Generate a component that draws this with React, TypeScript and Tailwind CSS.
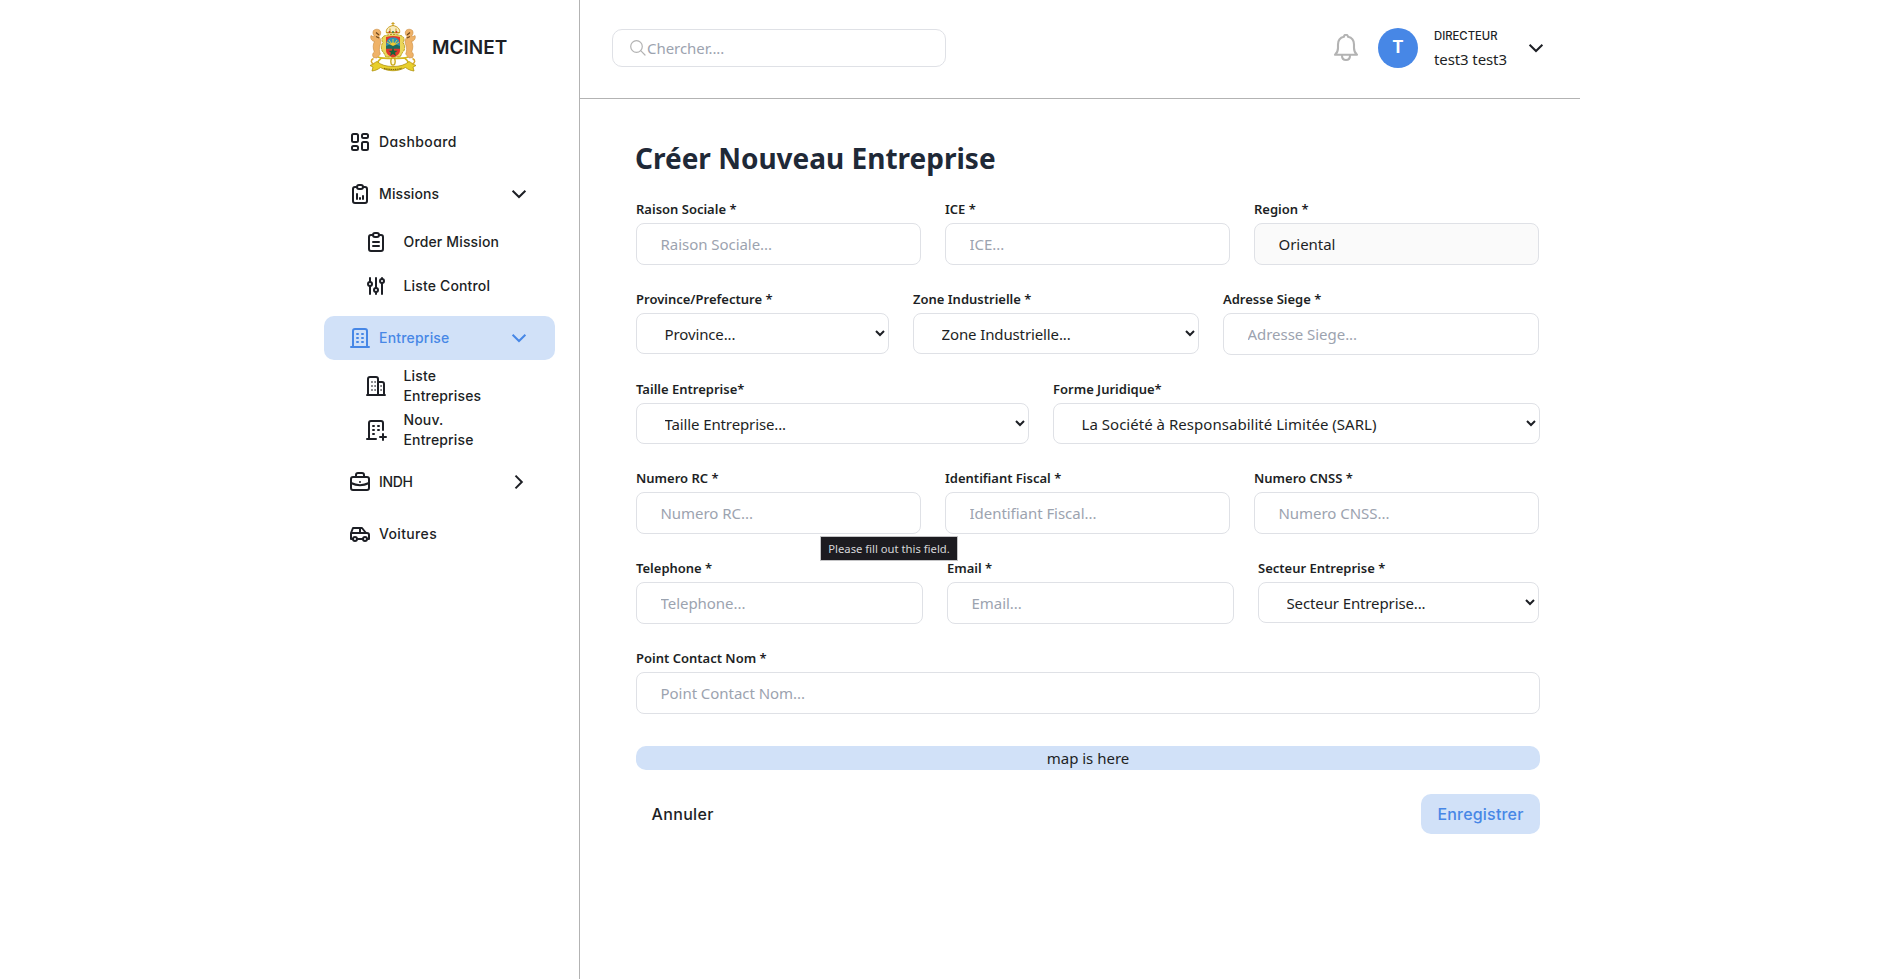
import type { ReactNode } from "react";

const geo = "font-['Inter',sans-serif] [font-feature-settings:'cv11','ss03']";

function Icon({ size = 24, children, className = "" }: { size?: number; children: ReactNode; className?: string }) {
  return (
    <svg width={size} height={size} viewBox="0 0 24 24" fill="none" stroke="currentColor" strokeWidth="2" strokeLinecap="round" strokeLinejoin="round" className={`shrink-0 ${className}`}>
      {children}
    </svg>
  );
}

const DashboardIcon = () => (
  <Icon>
    <rect x="4" y="4" width="6" height="8" rx="1.5" />
    <rect x="14" y="4" width="6" height="4" rx="1.5" />
    <rect x="14" y="12" width="6" height="8" rx="1.5" />
    <rect x="4" y="16" width="6" height="4" rx="1.5" />
  </Icon>
);

const ClipboardFrame = () => (
  <>
    <path d="M9 5H7a2 2 0 0 0-2 2v12a2 2 0 0 0 2 2h10a2 2 0 0 0 2-2V7a2 2 0 0 0-2-2h-2" />
    <rect x="9" y="3" width="6" height="4" rx="2" />
  </>
);

const ClipboardChartIcon = () => (
  <Icon>
    <ClipboardFrame />
    <path d="M9 12v5M12 16v1M15 14v3" />
  </Icon>
);

const ClipboardTextIcon = () => (
  <Icon>
    <ClipboardFrame />
    <path d="M9 12h6M9 16h6" />
  </Icon>
);

const AdjustmentsIcon = () => (
  <Icon>
    <circle cx="6" cy="10" r="2" />
    <path d="M6 4v4M6 12v8" />
    <circle cx="12" cy="16" r="2" />
    <path d="M12 4v10M12 18v2" />
    <circle cx="18" cy="7" r="2" />
    <path d="M18 4v1M18 9v11" />
  </Icon>
);

const BuildingIcon = () => (
  <Icon>
    <path d="M3 21h18M5 21V5a2 2 0 0 1 2-2h10a2 2 0 0 1 2 2v16" />
    <path d="M9 8h1M9 12h1M9 16h1M14 8h1M14 12h1M14 16h1" />
  </Icon>
);

const BuildingsIcon = () => (
  <Icon>
    <path d="M3 21h18M4 21V5a2 2 0 0 1 2-2h6a2 2 0 0 1 2 2v16M14 8h4a2 2 0 0 1 2 2v11" />
    <path d="M7.9 8h.2M7.9 12h.2M7.9 16h.2M11 8h.2M11 12h.2M11 16h.2M17 12h.2M17 16h.2" strokeWidth="1.6" />
  </Icon>
);

const BuildingPlusIcon = () => (
  <Icon>
    <path d="M3 21h9M5 21V5a2 2 0 0 1 2-2h10a2 2 0 0 1 2 2v7M16 19h6M19 16v6" />
    <path d="M9 8h1M9 12h1M9 16h1M14 8h1M14 12h1" />
  </Icon>
);

const BriefcaseIcon = () => (
  <Icon>
    <rect x="3" y="7" width="18" height="13" rx="2" />
    <path d="M8 7V5a2 2 0 0 1 2-2h4a2 2 0 0 1 2 2v2M12 12v.01M3 13a20 20 0 0 0 18 0" />
  </Icon>
);

const CarIcon = () => (
  <Icon>
    <circle cx="7" cy="17" r="2" />
    <circle cx="17" cy="17" r="2" />
    <path d="M5 17H3v-6l2-5h9l4 5h1a2 2 0 0 1 2 2v4h-2M9 17h6M3 11h15M12 11V6" />
  </Icon>
);

function Chevron({ right = false, className = "" }: { right?: boolean; className?: string }) {
  return (
    <svg width="16" height="16" viewBox="0 0 16 16" fill="none" stroke="currentColor" strokeWidth="2" className={`shrink-0 ${className}`}>
      <path d={right ? "M4.500 1.600 10.800 8 4.500 14.400" : "M1.600 4.700 8 11 14.400 4.700"} />
    </svg>
  );
}

function Emblem() {
  return (
    <svg width="48" height="52" viewBox="0 0 48 52" fill="none" className="shrink-0">
      <g stroke="#c99b1a" strokeWidth="1">
        <path d="M24 1v4M22.4 2.6h3.2" />
        <path d="M17.500 12c-1-3.500 1.500-6.500 6.500-7.500 5 1 7.500 4 6.500 7.500z" fill="#f8ecc0" />
        <path d="M17.500 11.500h13M21 11V7.500M27 11V7.500" />
      </g>
      <circle cx="20.500" cy="11" r=".9" fill="#c8322b" />
      <circle cx="24" cy="11" r=".9" fill="#2c7a45" />
      <circle cx="27.500" cy="11" r=".9" fill="#c8322b" />
      <path d="M16.500 14.500c-4 1-4.500 4.500-2.500 7-2.500 3-2 8 .5 10l2.500 4.500h14l2.500-4.500c2.500-2 3-7 .5-10 2-2.500 1.500-6-2.500-7-5-1.500-10-1.500-15 0z" fill="#ead75a" stroke="#b79a18" strokeWidth="1" strokeDasharray="2.500 .8" />
      <g fill="#efb268" stroke="#c98a3d" strokeWidth=".6">
        <path d="M4.500 9.500c2.500-2 6-1.500 7 1 .8 2-.5 4-1.500 5 2 3 2.500 6 1 9-1 3-.8 5.500.3 8.500L8 37l-3.500-.5c-1.500-2-1-4.500.8-5.500-1.500-4-1.500-7.500.2-10.500-3-.5-4.500-3.500-3.500-6 1.500 1 2.500 1.500 3.500.7-1.500-1.700-2-3.500-1-5.700z" />
        <path d="M43.500 9.500c-2.500-2-6-1.500-7 1-.8 2 .5 4 1.500 5-2 3-2.500 6-1 9 1 3 .8 5.500-.3 8.500L40 37l3.500-.5c1.500-2 1-4.500-.8-5.500 1.500-4 1.500-7.500-.2-10.500 3-.5 4.500-3.500 3.500-6-1.500 1-2.500 1.500-3.500.7 1.500-1.700 2-3.500 1-5.700z" />
      </g>
      <path d="M7 11.500l3 2.500M7 15.500l3 1.500M41 11.500l-3 2.500M41 15.500l-3 1.500" stroke="#6b451c" strokeWidth="1.200" />
      <path d="M17 16c5-1.500 9-1.500 14 0v13c0 4-3 6-7 7.500-4-1.500-7-3.500-7-7.500z" fill="#e0392c" />
      <path d="M17 26c0-8 3-9.500 7-9.500s7 1.500 7 9.500z" fill="#2f93b5" />
      <path d="M24 25v-7M24 25l-4-6M24 25l4-6M24 25l-6-4M24 25l6-4" stroke="#d8cc45" strokeWidth="1" />
      <path d="M20.500 25a3.500 3.500 0 0 1 7 0z" fill="#f1c933" />
      <path d="M17 25l4-1.500 3 1.500 3-1.500 4 1.500v2.800H17z" fill="#1e6b60" />
      <path d="M24 26.500l1.300 3.300h3.300l-2.600 2 1 3.200-3-2-3 2 1-3.200-2.600-2h3.300z" fill="#17633a" />
      <path d="M9 36c4 1.500 9 1.500 15 1.500s11 0 15-1.500M8 43c1-2.500 2-4.500 4-5.500M40 43c-1-2.500-2-4.500-4-5.500" stroke="#d4b81f" strokeWidth="1.600" />
      <ellipse cx="24" cy="40.500" rx="2.200" ry="3.600" fill="#fff9dc" stroke="#c9a714" strokeWidth="1.300" />
      <path d="M1 44.500c3-1 4.500-3 7-4 4 3.500 9 5 16 5s12-1.500 16-5c2.500 1 4 3 7 4l-3 1.500 1 4c-4-.5-6.500-2-8.500-3.500-8 4.300-17 4.300-25 0-2 1.500-4.500 3-8.500 3.500l1-4z" fill="#e8cf2c" stroke="#b0930f" strokeWidth=".8" />
      <path d="M15 47.300c6 1.600 12 1.600 18 0" stroke="#7d6a14" strokeWidth="1.200" strokeDasharray="1.500 .7" />
      <path d="M4.500 37.500c-3 1.500-3 4.500.5 5.500M43.500 37.500c3 1.500 3 4.500-.5 5.500" stroke="#d9a92c" strokeWidth="1.500" />
    </svg>
  );
}

function NavItem({ icon, label, arrow, active = false, tracking }: { icon: ReactNode; label: string; arrow?: "down" | "right"; active?: boolean; tracking: string }) {
  return (
    <a className={`flex h-11 w-[231px] items-center gap-2 rounded-[10px] pr-7 pl-6 text-[14px] font-medium ${tracking} ${active ? "bg-[#d1e1f8] text-[#4787e6]" : "text-[#1d1f25]"}`}>
      {icon}
      <span className="-ml-px flex-1 pb-px">{label}</span>
      {arrow && <Chevron right={arrow === "right"} />}
    </a>
  );
}

function SubItem({ icon, label }: { icon: ReactNode; label: string }) {
  return (
    <a className="flex h-11 w-[200px] items-center gap-[15.500px] pl-10 text-[14px] leading-5 font-medium tracking-[0.150px] text-[#1d1f25]">
      {icon}
      <span className="w-[104px]">{label}</span>
    </a>
  );
}

function Field({ label, width, children }: { label: string; width: string; children: ReactNode }) {
  return (
    <label className={`flex flex-col ${width}`}>
      <span className="h-6 text-[13px] leading-5 font-[560] text-[#1d1f25]">{label}</span>
      {children}
    </label>
  );
}

function TextField({ label, width, value }: { label: string; width: string; value?: string }) {
  return (
    <Field label={label} width={width}>
      <input
        className="h-[42px] w-full rounded-lg border border-[#dfe1e6] bg-white pr-6 pl-[23.500px] text-[15px] tracking-[-0.040px] text-[#1d1f25] placeholder:text-[#9ca3af] disabled:bg-[#fafafa]"
        placeholder={`${label.replace(" *", "")}...`}
        defaultValue={value}
        disabled={value !== undefined}
      />
    </Field>
  );
}

function SelectField({ label, width, value, tracking = "tracking-[-0.120px]" }: { label: string; width: string; value: string; tracking?: string }) {
  return (
    <Field label={label} width={width}>
      <select className={`h-[41px] w-full rounded-lg border border-[#dfe1e6] bg-white pr-6 pl-[23.500px] text-[15px] text-[#1d1f25] ${tracking}`}>
        <option>{value}</option>
      </select>
    </Field>
  );
}

function Sidebar() {
  return (
    <aside className={`flex w-[280px] shrink-0 flex-col border-r border-[#b3b3b3] pl-6 ${geo}`}>
      <div className="flex h-[120px] items-start gap-[15px] pt-[21px] pl-[45px]">
        <Emblem />
        <span className="pt-[13px] text-[19px] leading-7 font-semibold text-[#1d1f25]">MCINET</span>
      </div>
      <nav className="flex flex-col gap-2">
        <NavItem icon={<DashboardIcon />} label="Dashboard" tracking="tracking-[0.400px]" />
        <div>
          <NavItem icon={<ClipboardChartIcon />} label="Missions" arrow="down" tracking="tracking-[0.100px]" />
          <div className="pt-1">
            <SubItem icon={<ClipboardTextIcon />} label="Order Mission" />
            <SubItem icon={<AdjustmentsIcon />} label="Liste Control" />
          </div>
        </div>
        <div>
          <NavItem icon={<BuildingIcon />} label="Entreprise" arrow="down" active tracking="tracking-[0.200px]" />
          <div className="pt-1">
            <SubItem icon={<BuildingsIcon />} label="Liste Entreprises" />
            <SubItem icon={<BuildingPlusIcon />} label="Nouv. Entreprise" />
          </div>
        </div>
        <NavItem icon={<BriefcaseIcon />} label="INDH" arrow="right" tracking="tracking-[-0.300px]" />
        <NavItem icon={<CarIcon />} label="Voitures" tracking="tracking-[0.350px]" />
      </nav>
    </aside>
  );
}

function Header() {
  return (
    <header className="flex h-[99px] items-center border-b border-[#b3b3b3] pr-9 pb-[2px] pl-8">
      <div className="flex h-[38px] w-[334px] items-center rounded-[10px] border border-[#dfe1e6] pl-[17px]">
        <svg width="16" height="16" viewBox="0 0 16 16" fill="none" stroke="#b3b3b3" strokeWidth="1.2" strokeLinecap="round" className="shrink-0">
          <circle cx="6.500" cy="6.500" r="5.800" />
          <path d="M10.700 10.700 15 15" />
        </svg>
        <input className="w-[280px] pl-[1px] text-[15px] tracking-[-0.050px] outline-none placeholder:text-[#9ca3af]" placeholder="Chercher...." />
      </div>
      <div className="ml-auto flex items-center pb-px">
        <svg width="26" height="28" viewBox="0 0 26 28" fill="none" stroke="#b3b3b3" strokeWidth="2.100" strokeLinecap="round" strokeLinejoin="round" className="shrink-0">
          <path d="M2 20.800h22c-1.800-1.600-3-4-3-6.800v-3.500c0-4.300-2.600-7-6-7.700a2 2 0 0 0-4 0c-3.400.7-6 3.400-6 7.700V14c0 2.800-1.200 5.200-3 6.800z" />
          <path d="M9 21.500c0 2.700 1.600 4.500 4 4.500s4-1.800 4-4.500" />
        </svg>
        <div className={`ml-[19px] flex size-10 items-center justify-center rounded-full bg-[#4787e6] pt-px text-[17px] font-bold text-white ${geo}`}>T</div>
        <div className="ml-[16px] w-[94px]">
          <div className={`pt-px text-[11.300px] leading-[21px] font-medium text-[#1d1f25] ${geo}`}>DIRECTEUR</div>
          <div className="text-[15px] leading-6 tracking-[-0.100px] text-[#1d1f25]">test3 test3</div>
        </div>
        <Chevron className="text-[#1d1f25]" />
      </div>
    </header>
  );
}

export default function App() {
  return (
    <div className="min-h-[979px] w-full bg-white font-['Noto_Sans',sans-serif]">
      <div className="ml-[300px] flex min-h-[979px] w-[1280px]">
        <Sidebar />
        <div className="flex w-[1000px] flex-col">
          <Header />
          <main className="flex flex-col pt-[40px] pr-10 pl-14">
            <h1 className="-ml-px h-[60px] text-[28px] leading-[38px] font-bold text-[#1f2937]">Créer Nouveau Entreprise</h1>
            <form className="relative flex flex-col gap-6">
              <div className="flex gap-6">
                <TextField label="Raison Sociale *" width="w-[285px]" />
                <TextField label="ICE *" width="w-[285px]" />
                <TextField label="Region *" width="w-[285px]" value="Oriental" />
              </div>
              <div className="flex gap-6">
                <SelectField label="Province/Prefecture *" width="w-[253px]" value="Province..." />
                <SelectField label="Zone Industrielle *" width="w-[286px]" value="Zone Industrielle..." />
                <TextField label="Adresse Siege *" width="w-[316px]" />
              </div>
              <div className="flex gap-6">
                <SelectField label="Taille Entreprise*" width="w-[393px]" value="Taille Entreprise..." />
                <SelectField label="Forme Juridique*" width="w-[487px]" value="La Société à Responsabilité Limitée (SARL)" tracking="tracking-[0.030px]" />
              </div>
              <div className="flex gap-6">
                <TextField label="Numero RC *" width="w-[285px]" />
                <TextField label="Identifiant Fiscal *" width="w-[285px]" />
                <TextField label="Numero CNSS *" width="w-[285px]" />
              </div>
              <div className="flex gap-6">
                <TextField label="Telephone *" width="w-[287px]" />
                <TextField label="Email *" width="w-[287px]" />
                <SelectField label="Secteur Entreprise *" width="w-[281px]" value="Secteur Entreprise..." />
              </div>
              <TextField label="Point Contact Nom *" width="w-[904px]" />
              <div className="mt-2 h-6 w-[904px] rounded-[10px] bg-[#d1e1f8] text-center text-[15px] leading-[25px] text-[#1d1f25]">map is here</div>
              <div className={`flex w-[904px] justify-between text-[16px] font-medium text-[#1d1f25] ${geo}`}>
                <button type="button" className="h-10 pb-px pl-[15.500px] tracking-[0.350px]">Annuler</button>
                <button type="button" className="h-10 w-[119px] rounded-[10px] bg-[#d1e1f8] pb-px tracking-[0.200px] text-[#4787e6]">Enregistrer</button>
              </div>
              <div className="absolute top-[337px] left-[184px] h-[25px] w-[138px] border border-[#c4c4c6] bg-[#1c1b20] text-center text-[11.250px] leading-[23px] text-[#d6d6d8]">Please fill out this field.</div>
            </form>
          </main>
        </div>
      </div>
    </div>
  );
}
